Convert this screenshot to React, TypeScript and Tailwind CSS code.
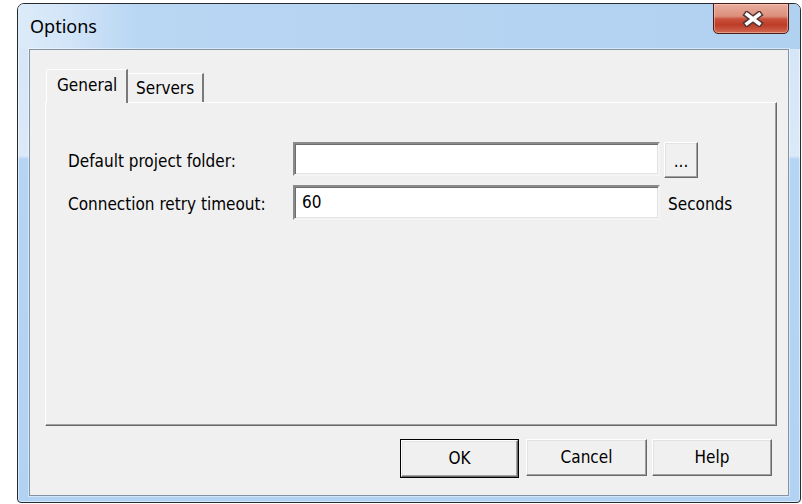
import * as React from "react"

const uiFont =
  "font-['DejaVu_Sans_Condensed','DejaVu_Sans',sans-serif] [font-stretch:semi-condensed] text-[17px] text-black"

// classic raised 3D edge used by push buttons
const raised =
  "border border-t-white border-l-white border-r-[#696969] border-b-[#696969] bg-[#f0f0f0] shadow-[inset_-1px_-1px_0_#a0a0a0,inset_1px_1px_0_#e3e3e3]"

// sunken edge for text boxes
const sunken =
  "border-2 border-t-[#8a8a8a] border-l-[#8a8a8a] border-r-[#f4f4f4] border-b-[#f4f4f4] bg-white shadow-[inset_1px_1px_0_#6d6d6d,inset_-1px_-1px_0_#e3e3e3]"

const CloseButton: React.FC = () => (
  <button
    type="button"
    className="
      absolute -top-px right-[11px] flex h-[31px] w-[76px] items-center justify-center
      rounded-b-[5px] border border-[#4c1d16]
      bg-[linear-gradient(180deg,#e9ad9d_0%,#dc8f7b_42%,#c9503b_52%,#bd3c28_72%,#d06a52_100%)]
      shadow-[inset_0_0_0_1px_rgba(255,220,210,0.45)]
    "
  >
    <svg width="22" height="16" viewBox="0 0 22 16" className="mt-px ml-[3px]">
      <path d="M5 3.5 L17 12.5 M17 3.5 L5 12.5" stroke="#4a3434" strokeWidth="6.5" strokeLinecap="square" />
      <path d="M5 3.5 L17 12.5 M17 3.5 L5 12.5" stroke="#ffffff" strokeWidth="3.6" strokeLinecap="square" />
    </svg>
  </button>
)

const PushButton: React.FC<{ label: string; className?: string }> = ({ label, className }) => (
  <button type="button" className={`flex h-[37px] items-center justify-center ${raised} ${className ?? ""}`}>
    {label}
  </button>
)

export default function App() {
  return (
    <div className={`h-[504px] w-[802px] overflow-hidden bg-white pt-[3px] pl-[17px] ${uiFont}`}>
      <div
        className="
          relative flex h-[500px] w-[784px] flex-col rounded-t-[7px] rounded-b-[4px]
          border border-[#262b30] px-[11px] pb-[6px]
          bg-[linear-gradient(180deg,#d3e5f7_0px,#dbe9f8_152px,#b6d5f5_155px,#b2d2f3_100%)]
          shadow-[inset_0_0_0_1px_rgba(255,255,255,0.5)]
        "
      >
        {/* caption bar */}
        <div
          className="
            -mx-[11px] flex h-[45px] shrink-0 items-center rounded-t-[6px] pl-[12px]
            bg-[linear-gradient(90deg,#dcebf9_0px,#d2e5f8_50px,#b9d6f3_120px,#b1d1f1_100%)]
          "
        >
          <span className="font-['Noto_Sans',sans-serif] text-[18px] [font-stretch:normal]">Options</span>
        </div>
        <CloseButton />

        {/* client area */}
        <div className="flex flex-1 flex-col border border-[#8393a6] bg-[#f0f0f0] shadow-[0_0_0_1px_rgba(255,255,255,0.45)]">
          <div className="mt-[19px] mr-[11px] ml-[15px] flex flex-col">
            {/* tab strip */}
            <div className="flex h-[33px] items-end pl-px">
              <div
                className="
                  relative z-10 -mb-px h-[34px] w-[82px] rounded-tl-[2px] border-t border-l border-white
                  border-r-2 border-r-[#7a7a7a] bg-[#f0f0f0] pt-[5px] pl-[10px] leading-[20px]
                "
              >
                General
              </div>
              <div className="h-[29px] w-[76px] border-t border-white border-r-2 border-r-[#7a7a7a] bg-[#f0f0f0] pt-[4px] pl-[8px] leading-[20px]">
                Servers
              </div>
            </div>

            {/* tab page */}
            <div
              className="
                h-[324px] border border-t-white border-l-white border-r-[#696969] border-b-[#696969]
                pl-[22px] shadow-[inset_-1px_-1px_0_#a0a0a0]
              "
            >
              <div className="mt-[39px] flex items-start">
                <div className="flex h-[34px] w-[225px] items-center pt-[5px]">Default project folder:</div>
                <div className={`h-[34px] w-[367px] ${sunken}`} />
                <button type="button" className={`ml-[4px] flex h-[36px] w-[34px] items-center justify-center pt-[3px] ${raised}`}>
                  ...
                </button>
              </div>
              <div className="mt-[7px] flex items-center">
                <div className="flex h-[35px] w-[225px] items-center pt-[5px]">Connection retry timeout:</div>
                <div className={`flex h-[35px] w-[367px] items-center pl-[7px] ${sunken}`}>60</div>
                <div className="ml-[8px] flex h-[35px] items-center pt-[5px]">Seconds</div>
              </div>
            </div>
          </div>

          {/* dialog buttons */}
          <div className="mt-[13px] flex justify-end pr-[16px]">
            <div className="border border-black">
              <PushButton label="OK" className="h-[35px] w-[117px]" />
            </div>
            <PushButton label="Cancel" className="ml-[7px] w-[121px]" />
            <PushButton label="Help" className="ml-[5px] w-[120px]" />
          </div>
        </div>
      </div>
    </div>
  )
}
